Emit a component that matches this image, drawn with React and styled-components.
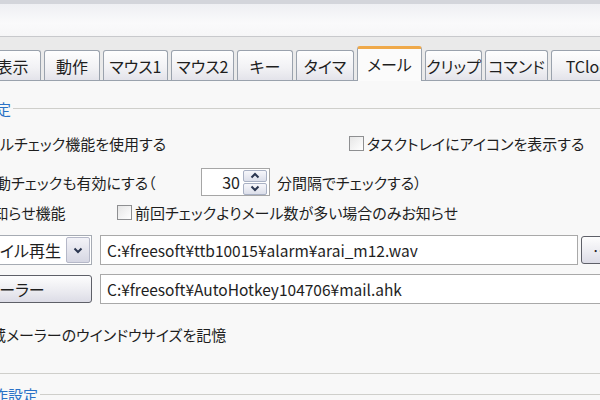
import React from "react";
import styled, { createGlobalStyle, css } from "styled-components";

const GlobalStyle = createGlobalStyle`
  html, body { margin: 0; padding: 0; }
  body {
    background: #f8f8f8;
    font-family: "Noto Sans CJK JP", "Noto Sans", sans-serif;
    font-feature-settings: "palt";
    color: #1e1e1e;
  }
`;

const tabs = [
  { label: "表示", w: 57 },
  { label: "動作", w: 56 },
  { label: "マウス1", w: 65 },
  { label: "マウス2", w: 63 },
  { label: "キー", w: 56 },
  { label: "タイマ", w: 58 },
  { label: "メール", w: 65, active: true },
  { label: "クリップ", w: 57 },
  { label: "コマンド", w: 63 },
  { label: "TClock", w: 80 },
];

export default function App() {
  return (
    <>
      <GlobalStyle />
      <Window>
        <TitleBand />
        <TabStrip>
          {tabs.map((t) => (
            <Tab key={t.label} $w={t.w} $active={t.active}>
              {t.label}
            </Tab>
          ))}
        </TabStrip>
        <Panel>
          <Group>
            <Legend $top={19}>
              <LegendText $cut={-19}>設定</LegendText>
              <LegendLine />
            </Legend>

            <Row $top={15} $h={24}>
              <Label $cut={-28} $w={377}>メールチェック機能を使用する</Label>
              <Check />
              <Label>タスクトレイにアイコンを表示する</Label>
            </Row>

            <Row $top={13} $h={28}>
              <Label $cut={-19} $w={220}>自動チェックも有効にする（</Label>
              <Spinner>
                <SpinValue>30</SpinValue>
                <SpinButtons>
                  <SpinButton>
                    <Chevron up />
                  </SpinButton>
                  <SpinButton>
                    <Chevron />
                  </SpinButton>
                </SpinButtons>
              </Spinner>
              <Label $gap={7}>分間隔でチェックする）</Label>
            </Row>

            <Row $top={5} $h={22}>
              <Label $cut={-21} $w={138}>お知らせ機能</Label>
              <Check />
              <Label>前回チェックよりメール数が多い場合のみお知らせ</Label>
            </Row>

            <Row $top={12} $h={30}>
              <Combo>
                <ComboText>ファイル再生</ComboText>
                <ComboButton>
                  <Chevron />
                </ComboButton>
              </Combo>
              <Field $w={478}>C:¥freesoft¥ttb10015¥alarm¥arai_m12.wav</Field>
              <Button $gap={3} $w={40}>…</Button>
            </Row>

            <Row $top={9} $h={29}>
              <Button $cut={-62} $w={154}>メーラー</Button>
              <Field $w={520}>C:¥freesoft¥AutoHotkey104706¥mail.ahk</Field>
            </Row>

            <Row $top={20} $h={22}>
              <Label $cut={-24}>内蔵メーラーのウインドウサイズを記憶</Label>
            </Row>
          </Group>

          <Legend $top={12}>
            <LegendText $cut={-22}>動作設定</LegendText>
            <LegendLine />
          </Legend>
        </Panel>
      </Window>
    </>
  );
}

function Chevron({ up }) {
  return (
    <svg width="10" height="7" viewBox="0 0 10 7">
      <path
        d={up ? "M1.5 5.5 L5 2 L8.5 5.5" : "M1.5 1.5 L5 5 L8.5 1.5"}
        fill="none"
        stroke="#2b3650"
        strokeWidth="2"
      />
    </svg>
  );
}

const Window = styled.div`
  width: 600px;
  height: 400px;
  overflow: hidden;
  display: flex;
  flex-direction: column;
  background: #f8f8f8;
`;

const TitleBand = styled.div`
  flex: none;
  height: 32px;
  border-top: 4px solid #d3d5db;
  border-bottom: 1px solid #c8c9cc;
  background: linear-gradient(#eeeff3, #fafafb 60%, #f6f6f7);
`;

const TabStrip = styled.div`
  flex: none;
  height: 43px;
  display: flex;
  align-items: flex-end;
  background: #eaeaea;
  margin-left: -16px;
`;

const Tab = styled.div`
  flex: none;
  box-sizing: border-box;
  width: ${(p) => p.$w}px;
  height: 30px;
  margin-right: 3px;
  display: flex;
  align-items: center;
  justify-content: center;
  font-size: 16px;
  white-space: nowrap;
  border: 1px solid #9aa2ad;
  border-bottom: none;
  border-radius: 3px 3px 0 0;
  background: linear-gradient(#fefefe, #f1f1f4 60%, #e3e3ea);
  ${(p) =>
    p.$active &&
    css`
      height: 35px;
      margin-bottom: -1px;
      position: relative;
      z-index: 1;
      border-top: 3px solid #efa94a;
      background: #fbfbfb;
      padding-bottom: 3px;
    `}
`;

const Panel = styled.div`
  flex: 1;
  border-top: 1px solid #9aa2ad;
  background: #f8f8f8;
`;

const Group = styled.div`
  border-bottom: 1px solid #cfcfcb;
  padding-bottom: 28px;
`;

const Legend = styled.div`
  display: flex;
  align-items: center;
  height: 16px;
  margin-top: ${(p) => p.$top}px;
  color: #2a72c6;
  font-size: 15px;
`;

const LegendText = styled.span`
  flex: none;
  margin-left: ${(p) => p.$cut}px;
  white-space: nowrap;
`;

const LegendLine = styled.div`
  flex: 1;
  margin-left: 2px;
  border-top: 1px solid #cfcfcb;
`;

const Row = styled.div`
  display: flex;
  align-items: center;
  height: ${(p) => p.$h}px;
  margin-top: ${(p) => p.$top}px;
  font-size: 15px;
  white-space: nowrap;
`;

const Label = styled.span`
  flex: none;
  margin-left: ${(p) => p.$cut ?? p.$gap ?? 0}px;
  ${(p) => p.$w && `width: ${p.$w}px;`}
`;

const Check = styled.span`
  flex: none;
  box-sizing: border-box;
  width: 15px;
  height: 15px;
  margin-right: 3px;
  border: 1px solid #8e8f91;
  background: linear-gradient(135deg, #e6e6e6, #ffffff);
`;

const Spinner = styled.div`
  flex: none;
  box-sizing: border-box;
  width: 69px;
  height: 28px;
  display: flex;
  align-items: center;
  justify-content: flex-end;
  gap: 3px;
  padding-right: 2px;
  border: 1px solid #a6a6a6;
  background: #ffffff;
`;

const SpinValue = styled.span`
  font-size: 16px;
`;

const SpinButtons = styled.div`
  display: flex;
  flex-direction: column;
  gap: 1px;
`;

const SpinButton = styled.div`
  box-sizing: border-box;
  width: 24px;
  height: 12px;
  display: flex;
  align-items: center;
  justify-content: center;
  border: 1px solid #a9b1c4;
  border-radius: 2px;
  background: linear-gradient(#f7f7fb, #dcdfea);
`;

const Combo = styled.div`
  flex: none;
  box-sizing: border-box;
  width: 132px;
  height: 30px;
  margin-left: -40px;
  display: flex;
  align-items: stretch;
  border: 1px solid #a6abb3;
  background: #ffffff;
  font-size: 16px;
`;

const ComboText = styled.span`
  flex: 1;
  display: flex;
  align-items: center;
  justify-content: flex-end;
  padding-right: 4px;
`;

const ComboButton = styled.div`
  flex: none;
  box-sizing: border-box;
  width: 24px;
  margin: 1px;
  display: flex;
  align-items: center;
  justify-content: center;
  border: 1px solid #b5b8c8;
  border-radius: 2px;
  background: linear-gradient(#f3f3f8, #d6d7e3);
`;

const Field = styled.div`
  flex: none;
  box-sizing: border-box;
  width: ${(p) => p.$w}px;
  height: 30px;
  margin-left: 8px;
  padding-left: 6px;
  display: flex;
  align-items: center;
  font-size: 15.5px;
  border: 1px solid #a9a9a9;
  background: #ffffff;
`;

const Button = styled.div`
  flex: none;
  box-sizing: border-box;
  width: ${(p) => p.$w}px;
  height: 28px;
  margin-left: ${(p) => p.$cut ?? p.$gap ?? 0}px;
  display: flex;
  align-items: center;
  justify-content: center;
  font-size: 16px;
  border: 1px solid #5e6068;
  border-radius: 3px;
  background: linear-gradient(#fdfdfd, #ececf1 55%, #dcdce6);
  color: #1e1e1e;
`;
